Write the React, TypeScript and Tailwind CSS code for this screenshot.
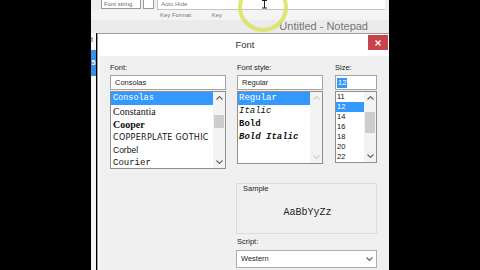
import clsx from 'clsx'

const ui = "font-['Liberation_Sans','Noto_Sans',Arial,sans-serif]"
const mono = "font-['Liberation_Mono','DejaVu_Sans_Mono',monospace]"
const serif = "font-['Liberation_Serif','DejaVu_Serif',serif]"

const fontNames = [
  { name: 'Consolas', cls: clsx(mono, 'text-[8.5px]'), selected: true },
  { name: 'Constantia', cls: clsx(serif, 'text-[10px]') },
  { name: 'Cooper', cls: clsx(serif, 'text-[10px] font-bold') },
  { name: 'COPPERPLATE GOTHIC', cls: "font-['DejaVu_Sans',sans-serif] text-[8px] tracking-[0.3px]" },
  { name: 'Corbel', cls: clsx(ui, 'text-[8.5px]') },
  { name: 'Courier', cls: clsx(mono, 'text-[9px]') },
]

const styles = [
  { name: 'Regular', cls: '', selected: true },
  { name: 'Italic', cls: 'italic' },
  { name: 'Bold', cls: 'font-bold' },
  { name: 'Bold Italic', cls: 'font-bold italic' },
]

const sizes = ['11', '12', '14', '16', '18', '20', '22']

function Chevron({ up, faint }: { up?: boolean; faint?: boolean }) {
  return (
    <svg width="7" height="4" viewBox="0 0 7 4" className={faint ? 'text-[#cfcfcf]' : 'text-[#606060]'}>
      <path
        d={up ? 'M0.5 3.5 L3.5 0.6 L6.5 3.5' : 'M0.5 0.5 L3.5 3.4 L6.5 0.5'}
        fill="none"
        stroke="currentColor"
        strokeWidth="1.1"
      />
    </svg>
  )
}

function ScrollBar({ thumb, faint }: { thumb?: string; faint?: boolean }) {
  return (
    <div className="flex w-[12px] shrink-0 flex-col items-center bg-[#f3f3f3]">
      <div className="flex h-[12px] items-center">
        <Chevron up faint={faint} />
      </div>
      {thumb && <div className={clsx('w-[10px] bg-[#cdcdcd]', thumb)} />}
      <div className="flex-1" />
      <div className="flex h-[12px] items-center">
        <Chevron faint={faint} />
      </div>
    </div>
  )
}

function Label({ children }: { children: string }) {
  return <div className={clsx(ui, 'mb-[2px] h-[10px] text-[7.5px] leading-[10px] text-[#1e1e1e]')}>{children}</div>
}

function Field({ children }: { children: React.ReactNode }) {
  return (
    <div className={clsx(ui, 'flex h-[15px] items-center border border-[#a3a3a3] bg-white pl-[4px] text-[7.5px] text-[#222]')}>
      {children}
    </div>
  )
}

function App() {
  return (
    <div className="relative flex h-[270px] w-[480px] overflow-hidden bg-black">
      <div className="w-[91px] shrink-0" />

      <div className="flex w-[298px] shrink-0 flex-col">
        {/* notepad behind the dialog */}
        <div className="flex h-[10px] bg-[#efefef]">
          <div className="flex w-[66px] items-start pl-[10px]">
            <div className={clsx(ui, 'h-[9px] w-[40px] border border-t-0 border-[#9a9a9a] bg-white pl-[2px] text-[6px] leading-[8px] text-[#666]')}>
              Font string
            </div>
            <div className="ml-[2px] h-[9px] w-[11px] border border-t-0 border-[#9a9a9a] bg-white" />
          </div>
          <div className="flex-1 border-b border-l border-[#c4c4c4] bg-white pl-[3px]">
            <div className={clsx(ui, 'text-[6px] leading-[8px] text-[#777]')}>Auto Hide</div>
          </div>
          <div className="w-[4px]" />
        </div>
        <div className={clsx(ui, 'flex h-[10px] items-center bg-[#f4f4f4] pl-[69px] text-[6px] text-[#777]')}>
          <span>Key Format:</span>
          <span className="ml-[19px]">Key</span>
        </div>
        <div className={clsx(ui, 'flex h-[13px] items-center justify-end bg-[#ebebeb] pr-[21px] text-[11px] leading-[13px] text-[#767676]')}>
          Untitled - Notepad
        </div>

        <div className="flex flex-1">
          <div className="flex w-[5px] flex-col bg-[#f7f7f7]">
            <div className={clsx(ui, 'mt-[3px] h-[8px] text-[7px] leading-[8px] text-[#444]')}>t</div>
            <div className={clsx(ui, 'mt-[6px] flex h-[26px] items-center justify-center bg-[#3a8ee6] text-[7px] font-bold text-white')}>
              5
            </div>
          </div>

          {/* Font dialog */}
          <div className="ml-[1px] flex flex-1 flex-col border-l border-t border-[#9c9c9c]">
            <div className="flex h-[22px] bg-white">
              <div className={clsx(ui, 'flex-1 pl-[24px] text-center text-[9.5px] leading-[22px] text-[#333]')}>Font</div>
              <div className="mr-[1px] mt-[1px] flex h-[15px] w-[20px] items-center justify-center bg-[#c9434a]">
                <svg width="6" height="6" viewBox="0 0 6 6">
                  <path d="M0.5 0.5 L5.5 5.5 M5.5 0.5 L0.5 5.5" stroke="white" strokeWidth="1.3" />
                </svg>
              </div>
            </div>

            <div className="flex flex-1 flex-col border-l-2 border-[#fbfbfb] bg-[#f0f0f0] pl-[10px] pt-[7px]">
              <div className="flex items-start">
                <div className="w-[116px]">
                  <Label>Font:</Label>
                  <Field>Consolas</Field>
                  <div className="mt-[1px] flex h-[78px] border border-[#8f8f8f] bg-white">
                    <div className="flex-1 overflow-hidden">
                      {fontNames.map(f => (
                        <div
                          key={f.name}
                          className={clsx(
                            'h-[13px] overflow-hidden whitespace-nowrap pl-[2px] leading-[13px]',
                            f.cls,
                            f.selected ? 'bg-[#3399ff] text-white' : 'text-[#111]',
                          )}
                        >
                          {f.name}
                        </div>
                      ))}
                    </div>
                    <ScrollBar thumb="mt-[11px] h-[13px]" />
                  </div>
                </div>

                <div className="ml-[11px] w-[86px]">
                  <Label>Font style:</Label>
                  <Field>Regular</Field>
                  <div className="mt-[1px] flex h-[73px] border border-[#8f8f8f] bg-white">
                    <div className="flex-1 overflow-hidden">
                      {styles.map(s => (
                        <div
                          key={s.name}
                          className={clsx(
                            mono,
                            'h-[13px] whitespace-nowrap pl-[1px] text-[9px] leading-[13px]',
                            s.cls,
                            s.selected ? 'bg-[#3399ff] text-white' : 'text-[#111]',
                          )}
                        >
                          {s.name}
                        </div>
                      ))}
                    </div>
                    <ScrollBar faint />
                  </div>
                </div>

                <div className="ml-[12px] w-[42px]">
                  <Label>Size:</Label>
                  <Field>
                    <span className="-ml-[3px] bg-[#3399ff] px-[1px] leading-[10px] text-white">12</span>
                  </Field>
                  <div className="mt-[1px] flex h-[72px] border border-[#8f8f8f] bg-white">
                    <div className="flex-1 overflow-hidden">
                      {sizes.map(s => (
                        <div
                          key={s}
                          className={clsx(
                            ui,
                            'h-[10px] pl-[1px] text-[7.5px] leading-[10px]',
                            s === '12' ? 'bg-[#3399ff] text-white' : 'text-[#111]',
                          )}
                        >
                          {s}
                        </div>
                      ))}
                    </div>
                    <ScrollBar thumb="mt-[8px] h-[21px]" />
                  </div>
                </div>
              </div>

              <div className="ml-[126px] mt-[14px] w-[141px]">
                <div className="flex h-[51px] flex-col border border-[#dcdcdc]">
                  <div className={clsx(ui, 'pl-[6px] text-[7.5px] leading-[9px] text-[#1e1e1e]')}>Sample</div>
                  <div className="flex flex-1 items-center justify-center pb-[2px] pl-[2px]">
                    <span className={clsx(mono, 'text-[10px] text-[#222]')}>AaBbYyZz</span>
                  </div>
                </div>
                <div className={clsx(ui, 'mt-[3px] h-[10px] pl-[1px] text-[7.5px] leading-[10px] text-[#1e1e1e]')}>Script:</div>
                <div className={clsx(ui, 'mt-[3px] flex h-[18px] items-center justify-between border border-[#acacac] bg-white pl-[4px] pr-[3px] text-[7.5px] text-[#222]')}>
                  <span>Western</span>
                  <Chevron />
                </div>
              </div>
            </div>
          </div>
        </div>
      </div>

      <div className="flex-1" />

      {/* cursor highlight */}
      <div className="absolute left-[238px] top-[-18px] h-[50px] w-[50px] rounded-full border-[4px] border-[#dbe35a] opacity-85 blur-[0.5px]" />
      <svg className="absolute left-[261px] top-0" width="7" height="10" viewBox="0 0 7 10">
        <path d="M1 0.5 H6 M3.5 0.5 V8 M1 8 H6" stroke="#222" strokeWidth="1" fill="none" />
      </svg>
    </div>
  )
}

export default App
